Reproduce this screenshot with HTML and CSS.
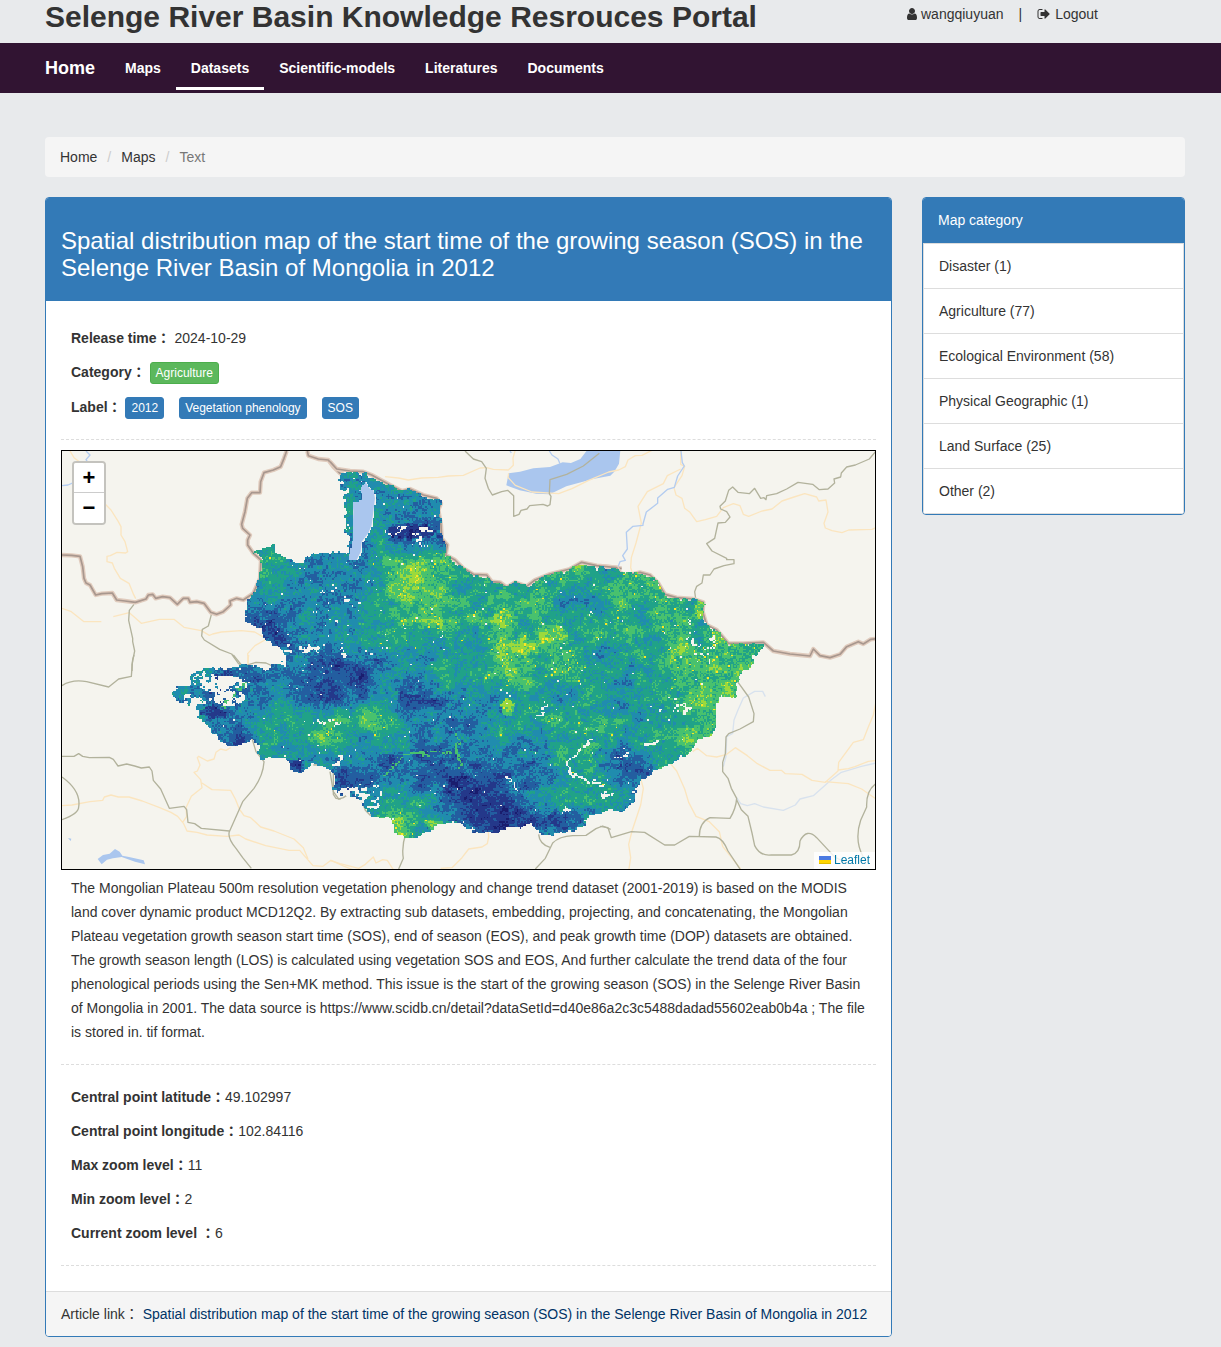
FILE: index.html
```html
<!DOCTYPE html>
<html lang="en">
<head>
  <meta charset="UTF-8" />
  <title>Selenge River Basin Knowledge Resrouces Portal</title>
  <link rel="stylesheet" href="styles.css">
</head>
<body>

  <header class="container top">
    <h1 class="site-title">Selenge River Basin Knowledge Resrouces Portal</h1>
    <div class="user-links">
      <a href="#"><svg class="icon icon-user" viewBox="256 0 1280 1792"><path d="M1536 1399q0 109-62.500 187t-150.500 78h-854q-88 0-150.500-78t-62.500-187q0-85 8.500-160.500t31.500-152 58.500-131 94-89 134.500-34.500q131 128 313 128t313-128q76 0 134.500 34.500t94 89 58.500 131 31.500 152 8.500 160.500zm-256-887q0 159-112.500 271.500t-271.500 112.500-271.500-112.500-112.500-271.500 112.500-271.500 271.500-112.500 271.500 112.500 112.500 271.500z"/></svg>wangqiuyuan</a>
      <span class="divider">|</span>
      <a href="#"><svg class="icon" viewBox="0 0 1792 1792"><path d="M704 1440q0 4 1 20t.5 26.500-3 23.500-10 19.500-20.500 6.500h-320q-119 0-203.500-84.500t-84.500-203.500v-704q0-119 84.500-203.500t203.500-84.500h320q13 0 22.500 9.500t9.500 22.500q0 4 1 20t.5 26.500-3 23.500-10 19.500-20.500 6.500h-320q-66 0-113 47t-47 113v704q0 66 47 113t113 47h312l11.500 1 11.500 3 8 5.500 7 9 2 13.500zm928-544q0 26-19 45l-544 544q-19 19-45 19t-45-19-19-45v-288h-448q-26 0-45-19t-19-45v-384q0-26 19-45t45-19h448v-288q0-26 19-45t45-19 45 19l544 544q19 19 19 45z"/></svg>Logout</a>
    </div>
  </header>

  <nav class="navbar">
    <div class="container nav-inner">
      <a class="brand" href="#">Home</a>
      <a class="nav-link" href="#">Maps</a>
      <a class="nav-link active" href="#">Datasets</a>
      <a class="nav-link" href="#">Scientific-models</a>
      <a class="nav-link" href="#">Literatures</a>
      <a class="nav-link" href="#">Documents</a>
    </div>
  </nav>

  <main class="container">
    <ol class="breadcrumb">
      <li><a href="#">Home</a></li>
      <li><a href="#">Maps</a></li>
      <li class="current">Text</li>
    </ol>

    <div class="columns">
      <article class="panel">
        <div class="panel-heading">
          <h3>Spatial distribution map of the start time of the growing season (SOS) in the Selenge River Basin of Mongolia in 2012</h3>
        </div>
        <div class="panel-body">
          <div class="info">
            <p><b>Release time：</b> 2024-10-29</p>
            <p><b>Category：</b> <button class="tag green">Agriculture</button></p>
            <p class="tags"><b>Label：</b> <button class="tag">2012</button><button class="tag">Vegetation phenology</button><button class="tag">SOS</button></p>
          </div>
          <hr>
          <div class="map">
            <svg class="map-layer" viewBox="62 451 813 418" preserveAspectRatio="xMidYMid slice">
              <!-- north west -->
              <g transform="translate(60 445) scale(.33333)">
                <path class="river" d="M78 18l12 12-12 14 8 12M6 122l18-2 18-8"/>
                <path class="road" d="M30 18l12 20 18 14M133 175l20 20 22 35 8 15v25l12 20 8 30-6 4-26-2-20 10-10 2v16l16 4 6 16 18 30 26 15 14 34 6 12M6 490l28 10 38 30h52M160 515l48-12 36 32 54-12 44 0 30 24 52 10 24 14 10-4 26-6 60-4 40 4 34 20M620 582l-35 20-22 24 2 34"/>
                <path class="rail" d="M222 478l-14 18-2 30 12 54 0 10 6 28-8 40v20M455 505l-10 38-18 10-2 20 8 12 46 28 36 14 20 28 16 10"/>
                <path class="halo" d="M6 330l29 1 25 3 8 31 4 35 6 14 12 6 17 30 18-4 32-2 13 21 25 3 31 4 32-10 7-12 13-2 9 12 21-5 22 3 22 20 18-18 15 0 5 12 20-2 22 5 20 27 18 6 20-8 22-20-2-12 20-8 20 5 30-20 20-45 3-55-23-20-17-25 0-15 7-15-22-20-3-12 10-38 7-40 13-17 25 0 2-33 10-27 28-8 22-10 10-25 8-22M742 18l3 14 30 10 30 3 15 20 20 20 20 9"/>
                <path class="border" d="M6 330l29 1 25 3 8 31 4 35 6 14 12 6 17 30 18-4 32-2 13 21 25 3 31 4 32-10 7-12 13-2 9 12 21-5 22 3 22 20 18-18 15 0 5 12 20-2 22 5 20 27 18 6 20-8 22-20-2-12 20-8 20 5 30-20 20-45 3-55-23-20-17-25 0-15 7-15-22-20-3-12 10-38 7-40 13-17 25 0 2-33 10-27 28-8 22-10 10-25 8-22M742 18l3 14 30 10 30 3 15 20 20 20 20 9"/>
              </g>
              <!-- north, Khuvsgul and Baikal -->
              <g transform="translate(330 445) scale(.33333)">
                <path class="water" d="M105 108l13 22 12 5 5 25-5 40-5 40-10 25-20 25-3 30-12 25H52l6-25 4-20 6-50 2-50-2-30 24-5V145l-7-10zM536 85l34-5 40-10 50-4 38-14 25 2 28-12 20-26h100l-4 40-14 24-12 12-52 10-80 22-50 24-40-2-50-10-40-15z"/>
                <path class="river" d="M658 18l8 12 18 12 6 14M540 18l4 6"/>
                <path class="road" d="M165 95l40 4 30 6 40-6 50-2 30-4 45-2 50-22 20-1 20 5 45 2 15-14-1-22 8-28M536 85l-2 12 22 24 50 20 80 5 40-15 50-25 60-25 30-6 20-10 8-20 22-13 20-1 30-15"/>
                <path class="rail" d="M405 18l25 24 25 8 14 20-4 30 10 30 12 20 28-10 18-4 18 16v62l16-6 6-12 18-4 8-10 40-4 14 5 7-4 3-25-5-8 2-42 50-16 50-25 48-38"/>
                <path class="halo" d="M0 50l20 22 40 6 40 2 25 10 55 30 35 18 25-6 40 18 40 10 13 15-8 20 8 45 2 40 17 20-5 30 28 15 25 25 30 18 40 2 15 20 25 2 20 15 25-15 35 12 25-19 45-18 60-15 35-20 45 10 60 6 15 3"/>
                <path class="border" d="M0 50l20 22 40 6 40 2 25 10 55 30 35 18 25-6 40 18 40 10 13 15-8 20 8 45 2 40 17 20-5 30 28 15 25 25 30 18 40 2 15 20 25 2 20 15 25-15 35 12 25-19 45-18 60-15 35-20 45 10 60 6 15 3"/>
              </g>
              <!-- north east -->
              <g transform="translate(600 445) scale(.33333)">
                <path class="road" d="M242 18v40l12 6-8 28-24 36 6 22 18 10 8 30 16 12 20 28 26-6 34-10 20-26 30-12 20 6 10 26 16 6 40-16 30-6 30-24 36-12 32-10 36 10 6 12 22-3 6 36-12 34 4 14 20 8 30 6 20-8 70-2 18-8M242 72l-40 20-12 24-48 24-28 44 10 50-16 60-14 44-2 30 4 12"/>
                <path class="river" d="M243 18l4 35 6 10-20 30-10 34-20 6-30 26 0 16-34 26-10 36 0 4-30 3-20 18 3 50-14 20 8 14-16 4-6 16"/>
                <path class="rail" d="M828 18l-20 24-42 18-26 6-16 18-2 12-20 6 2 12-20 18-26 2-20-16-44-6-34 20-30 14-30 6-2 12-6-6-10 2-18-30-16 16-34-4-16-16-12 10-10 32-16 16 2 8 18 8 10 16-14 16-22 2-10 46-24 16 16 22 44 22 0 4h22v12l-30 6-30 10-12 18-20 0-4 24-16 10-6 16 4 28"/>
                <path class="halo" d="M0 363l50 5 10 15 20 9 40-10 30 8 25 25 20 33 35 10 50 4 30 10-2 28 12 40 30 15 35 40 45 0 60-3 30 26 50 9 60 6 10-21 20 20 30 6 30-10 20-23 35-15 15 7 22-14 18-2"/>
                <path class="border" d="M0 363l50 5 10 15 20 9 40-10 30 8 25 25 20 33 35 10 50 4 30 10-2 28 12 40 30 15 35 40 45 0 60-3 30 26 50 9 60 6 10-21 20 20 30 6 30-10 20-23 35-15 15 7 22-14 18-2"/>
              </g>
              <!-- south west -->
              <g transform="translate(60 655) scale(.33333)">
                <path class="water" d="M113 612l16-12 20-4 16-14 14 8 8 12 20 4 44 10 4 12-30-8-40-14-26 4-18 4-16 14z M24 549l10 2-2 7z"/>
                <path class="road" d="M6 452l30-2 54-10 38-4 5-10 20-6 22 6h32l40 12 52 20 34 14 20 12 18 22 10 22 30 4 30 8 60 4 36-4 20 12 60 20 70 14h32l40 46 30 2 24-18 40 18 60 24M512 278l-14 8-16-4-14 10-6 20-20 6-26-14-4 4 8 22-8 18-10 4 20 22 4 24-32 26-16 34 2 26-12 18M426 384l30 20 56 2 14 26 12 30 14 20 20 6 30 28 40 12 60 24 28 26 14 34M563 25l3-25"/>
                <path class="rail" d="M6 92q30-20 74-12l66 16 30-24 38-8 4-50 4-14M520 0l28 34 40-12 30 2 30 14 20-4M6 304l36 0 14-8 12 8 20 4 60-1 12 6 14 20 26-6 24 6 20 6 24-3 8 12 4 28 22 26 26 58 44-6 8 10 4 38 20 4 20 14 84 8M6 366q58 42 50 90 0 20-50 38M576 250l12 40 24 30q-2 40-30 80l-34 40-40 90q-6 20 20 50l20 28 26 32M640 300l26-4 20 14M760 330l40-2 20 20 0 70 8 12 14 2"/>
              </g>
              <!-- south -->
              <g transform="translate(330 655) scale(.33333)">
                <path class="road" d="M0 616l30 10 56 14 20-12 24-22 8 18 20-10 14 2 18 28M332 640l34-2 30-30 20-26 40-6 16-10 4-20-2-30"/>
                <path class="rail" d="M0 350l10 60 16 22 14-4 30-20 22 20 14 38 14 14 40-6M228 534q-14 40-8 76l-14 32M626 538q2 30 36 40M616 642l30-32 22-46q20-20 60-22l40-1 30-20 20-8 24 10"/>
              </g>
              <!-- south east -->
              <g transform="translate(600 655) scale(.33333)">
                <path class="river pale" d="M496 125l-8-16-24 0-34 20-16 36-12 30-4 40-18 10-2 60-8 30M410 428l12 18 20 6 22-6 26 10 60 10 36-16 14-18 40-10 54-48 30-22 60-18 44-10"/>
                <path class="road" d="M828 140l-8 40-16 38-14 36-30 8-44 60-2 26-38 34-40-6-30-18-50-2-12-10h-34l-38-20-30-24-36-24-26 20-30 8-30-4-28-22-14 10M675 380l70 6 40 16 43 30M715 345l30-4 20-6 40-16 20-2M210 324l20 24 24 54 12 40 22 42 40 16 30 30 10 44 40 50 14 18M122 370l8 30-8 50-26 78-10 40 6 40-6 40"/>
                <path class="rail" d="M410 76l36 50 16 50-2 24-40 22-34 14-8 10-2 50-8 26 0 28 16 20 10 30 16 30q-2 30-20 60l-60-2q-32 14-32 56M410 434l14 30 20 20 12 50 8 38q16 32 50 28h60q26-6 26-42 20-40 50-10l30 32 24 26 40 20M0 514l24 4 10 30 60-18 40 2 60 38h30l44-26 80 2q20 4 36 42l36 54M828 386q-30 20-28 70l-18 40q-20 60 8 110"/>
              </g>
            </svg>
            <canvas class="map-layer raster" id="raster" width="542" height="279"></canvas>
            <div class="zoom">
              <button title="Zoom in">+</button>
              <button title="Zoom out">−</button>
            </div>
            <div class="attribution">
              <a href="#"><svg width="12" height="8" viewBox="0 0 12 8"><path fill="#4c7be1" d="M0 0h12v4H0z"/><path fill="#ffd500" d="M0 4h12v3H0z"/><path fill="#e0bc00" d="M0 7h12v1H0z"/></svg> Leaflet</a>
            </div>
          </div>
          <p class="description">The Mongolian Plateau 500m resolution vegetation phenology and change trend dataset (2001-2019) is based on the MODIS land cover dynamic product MCD12Q2. By extracting sub datasets, embedding, projecting, and concatenating, the Mongolian Plateau vegetation growth season start time (SOS), end of season (EOS), and peak growth time (DOP) datasets are obtained. The growth season length (LOS) is calculated using vegetation SOS and EOS, And further calculate the trend data of the four phenological periods using the Sen+MK method. This issue is the start of the growing season (SOS) in the Selenge River Basin of Mongolia in 2001. The data source is https://www.scidb.cn/detail?dataSetId=d40e86a2c3c5488dadad55602eab0b4a ; The file is stored in. tif format.</p>
          <hr>
          <div class="info">
            <p><b>Central point latitude：</b>49.102997</p>
            <p><b>Central point longitude：</b>102.84116</p>
            <p><b>Max zoom level：</b>11</p>
            <p><b>Min zoom level：</b>2</p>
            <p><b>Current zoom level ：</b>6</p>
          </div>
          <hr>
        </div>
        <div class="panel-footer">
          Article link： <a href="#">Spatial distribution map of the start time of the growing season (SOS) in the Selenge River Basin of Mongolia in 2012</a>
        </div>
      </article>

      <aside class="panel">
        <div class="side-heading">Map category</div>
        <ul class="categories">
          <li><a href="#">Disaster (1)</a></li>
          <li><a href="#">Agriculture (77)</a></li>
          <li><a href="#">Ecological Environment (58)</a></li>
          <li><a href="#">Physical Geographic (1)</a></li>
          <li><a href="#">Land Surface (25)</a></li>
          <li><a href="#">Other (2)</a></li>
        </ul>
      </aside>
    </div>
  </main>

  <script src="raster.js"></script>
</body>
</html>
```
FILE: styles.css
```css
* {
  box-sizing: border-box;
}

body {
  margin: 0;
  background: #e8eaec;
  color: #333;
  font-family: "Liberation Sans", Arial, "Noto Sans CJK TC", sans-serif;
  font-size: 14px;
  line-height: 24px;
}

a {
  color: #333;
  text-decoration: none;
}

.container {
  max-width: 1179px;
  margin: 0 auto;
  padding: 0 15px 0 24px;
}

.top {
  display: flex;
  height: 43px;
}

.site-title {
  flex: 0 0 75%;
  margin: 0;
  font-size: 30px;
  line-height: 33px;
}

.user-links {
  display: flex;
  padding: 2px 0 0 7px;
}

.divider {
  margin: 0 15px;
}

.icon {
  width: 14px;
  height: 14px;
  margin-right: 4px;
  fill: #333;
  vertical-align: -2px;
}

.icon-user {
  width: 10px;
}

.navbar {
  background: #311432;
}

.nav-inner {
  display: flex;
  height: 50px;
}

.brand,
.nav-link {
  color: #fff;
  font-weight: bold;
  line-height: 50px;
}

.brand {
  margin-right: 15px;
  font-size: 18px;
}

.nav-link {
  height: 47px;
  padding: 0 15px;
}

.nav-link.active {
  border-bottom: 3px solid #fff;
}

.breadcrumb {
  display: flex;
  margin: 44px 0 20px;
  padding: 8px 15px;
  list-style: none;
  background: #f5f5f5;
  border-radius: 4px;
}

.breadcrumb li + li::before {
  content: "/";
  padding: 0 10px;
  color: #ccc;
}

.breadcrumb .current {
  color: #777;
}

.columns {
  display: grid;
  grid-template-columns: minmax(0, 847fr) minmax(0, 263fr);
  align-items: start;
  gap: 30px;
}

.panel {
  background: #fff;
  border: 1px solid #337ab7;
  border-radius: 4px;
  overflow: hidden;
}

.panel-heading {
  padding: 29px 15px 20px;
  background: #337ab7;
  color: #fff;
}

.panel-heading h3 {
  margin: 0;
  font-size: 24px;
  font-weight: normal;
  line-height: 27px;
}

.panel-body {
  padding: 15px;
}

.info {
  padding: 10px 10px 0;
}

.info p {
  margin: 0 0 10px;
}

.info .tags {
  margin-top: 11px;
}

hr {
  margin: 10px 0;
  border: 0;
  border-top: 1px dashed #ddd;
}

.info + hr {
  margin-top: 20px;
}

.tag {
  height: 22px;
  margin: 0;
  padding: 1px 5px;
  border: 1px solid #337ab7;
  border-radius: 3px;
  background: #337ab7;
  color: #fff;
  font-family: inherit;
  font-size: 12px;
  line-height: 18px;
}

.tag.green {
  background: #5cb85c;
  border-color: #4cae4c;
}

.tag + .tag {
  margin-left: 15px;
}

.map {
  position: relative;
  height: 420px;
  border: 1px solid #000;
  background: #f5f4ee;
  overflow: hidden;
}

.map-layer {
  position: absolute;
  top: 0;
  left: 0;
  width: 100%;
  height: 100%;
}

.raster {
  object-fit: cover;
  image-rendering: pixelated;
}

.map-layer path {
  fill: none;
  stroke-linejoin: round;
}

.map-layer .water {
  fill: #aac6ee;
}

.map-layer .river {
  stroke: #b3ccf0;
  stroke-width: 4;
}

.map-layer .river.pale {
  stroke: #d8e2ee;
}

.map-layer .road {
  stroke: #fbe5bf;
  stroke-width: 4;
}

.map-layer .rail {
  stroke: #b2b29c;
  stroke-width: 4;
}

.map-layer .halo {
  stroke: #e0cbbd;
  stroke-width: 13;
}

.map-layer .border {
  stroke: #a8978e;
  stroke-width: 5;
}

.zoom {
  position: absolute;
  top: 10px;
  left: 10px;
  width: 34px;
  border: 2px solid #c4c3be;
  border-radius: 4px;
  overflow: hidden;
}

.zoom button {
  display: block;
  width: 30px;
  height: 30px;
  padding: 0;
  border: 0;
  background: #fff;
  color: #000;
  font: bold 22px/30px "Liberation Sans", sans-serif;
}

.zoom button:first-child {
  border-bottom: 1px solid #ccc;
}

.attribution {
  position: absolute;
  right: 0;
  bottom: 0;
  padding: 0 5px;
  background: rgba(255, 255, 255, 0.8);
  font-size: 12px;
  line-height: 17px;
}

.attribution a {
  color: #0078a8;
}

.description {
  margin: 0 0 20px;
  padding: 6px 10px 0;
}

.panel-footer {
  padding: 10px 15px;
  background: #f5f5f5;
  border-top: 1px solid #ddd;
}

.panel-footer a {
  color: #003366;
}

.side-heading {
  padding: 10px 15px 11px;
  background: #337ab7;
  color: #fff;
}

.categories {
  margin: 0;
  padding: 0;
  list-style: none;
  border: 1px solid #ddd;
}

.categories li {
  padding: 10px 15px;
}

.categories li + li {
  border-top: 1px solid #ddd;
}
```
FILE: raster.js
```js
// start-of-season classes, early (dark blue) to late (yellow)
const palette = [
  [26, 29, 110], [36, 56, 138], [35, 94, 160], [32, 140, 174],
  [32, 162, 136], [72, 193, 110], [155, 217, 60], [253, 231, 37]
];

// mean class per 20px cell, first cell at (170, 470)
const grid = [
  '333333333333333333333333333333',
  '333333333333334444444444444444',
  '333333334433224444444444444444',
  '333344333342224444444444444444',
  '333344333345554444445444444444',
  '333344333345554454444445544444',
  '333333333345554444533354544555',
  '333222333344554454444444454555',
  '333222334444444455544444454555',
  '333333322234344455454344455555',
  '332223222133444445444434444555',
  '332333222342223334434433445555',
  '333244445554332334444443445555',
  '332144454334233343344434455555',
  '333333333332222222344432433333',
  '333333332222221222334422433333',
  '333333332344421112344442233333',
  '333333333355432111233322223333',
  '333333333355443211222212333333',
  '333333333355543211222223333333'
];

const outline = [338,472,366,473,372,477,390,485,402,491,415,490,425,496,440,501,439,515,441,530,443,542,446,556,
  455,562,462,568,473,575,488,577,492,582,507,587,515,583,527,586,535,580,550,574,570,569,582,563,600,566,616,568,
  622,574,640,573,652,577,660,587,665,595,680,599,694,599,702,603,703,620,708,626,718,632,728,643,745,644,763,643,
  765,647,752,655,752,665,741,671,737,682,735,690,733,696,720,697,716,703,715,720,712,732,700,737,696,741,688,753,
  670,762,655,770,650,777,640,779,636,790,631,801,625,810,612,811,600,811,590,815,583,823,575,831,560,833,547,834,
  540,833,531,824,515,826,505,827,497,832,480,834,467,828,458,823,450,821,436,824,425,831,415,839,400,836,393,834,
  391,823,389,815,376,816,366,813,355,795,347,795,338,796,333,787,334,773,328,768,312,763,305,770,293,771,288,762,
  275,757,262,760,256,753,258,745,250,739,236,746,226,745,213,732,200,720,198,710,190,703,175,700,172,693,175,688,
  190,683,192,671,205,668,225,668,245,664,262,668,282,664,283,654,275,646,261,636,258,625,247,622,244,600,254,592,
  260,570,261,556,253,553,262,548,273,545,277,541,275,552,290,561,302,565,308,555,320,552,330,556,340,550,345,553,
  347,545,345,520,345,505,342,490,338,482];

const lake = [365,481,369,488,373,490,375,498,373,512,372,525,368,533,362,542,361,552,357,560,347,560,349,552,351,545,
  353,528,353,512,353,502,361,500,361,493,358,490];

// cells without data: x, y, rx, ry, share
const gaps = [
  [222, 684, 24, 9, 0.8], [228, 697, 16, 8, 0.7], [196, 698, 16, 6, 0.6], [205, 680, 14, 8, 0.4],
  [408, 531, 24, 6, 0.35], [425, 541, 18, 5, 0.35], [700, 640, 22, 26, 0.22], [675, 710, 20, 14, 0.25],
  [352, 795, 16, 9, 0.55], [372, 795, 10, 14, 0.35], [335, 607, 25, 22, 0.2], [300, 647, 20, 6, 0.35],
  [340, 650, 35, 8, 0.2], [335, 760, 12, 6, 0.4], [345, 478, 9, 9, 0.35], [346, 515, 4, 30, 0.35],
  [607, 795, 8, 4, 0.4], [595, 783, 9, 4, 0.3], [566, 810, 6, 4, 0.5], [320, 722, 20, 5, 0.25]
];

// local class shifts: x, y, rx, ry, shift
const spots = [
  [506, 708, 7, 9, 2], [440, 824, 18, 4, 1.5], [415, 684, 24, 14, -0.7], [458, 782, 10, 6, -1],
  [268, 630, 8, 9, -1], [500, 620, 20, 6, 0.8], [550, 632, 18, 9, 0.9], [515, 645, 22, 7, 0.8],
  [700, 610, 5, 10, 1.3], [690, 675, 20, 18, 0.5], [522, 757, 12, 8, 0.9], [395, 780, 20, 12, 0.5],
  [212, 713, 12, 6, -1.2], [380, 655, 20, 8, -0.8], [607, 760, 14, 12, -0.8], [565, 818, 18, 10, -0.8],
  [293, 765, 9, 6, -1.4], [410, 531, 24, 8, -1.2]
];

// valley lines: x1, y1, x2, y2, class (-1 is no data)
const valleys = [
  [403, 753, 452, 752, 5], [456, 734, 459, 768, 5], [403, 753, 385, 773, 5], [565, 762, 592, 738, -1],
  [565, 762, 574, 775, -1], [574, 775, 598, 784, -1], [535, 720, 547, 705, -1], [504, 776, 516, 788, -1],
  [222, 705, 246, 682, 5], [614, 757, 630, 752, -1], [645, 745, 656, 741, -1]
];

let seed = 7;
function random() {
  seed = (seed * 16807) % 2147483647;
  return seed / 2147483647;
}

function hash(x, y) {
  const n = Math.sin(x * 127.1 + y * 311.7) * 43758.5453;
  return n - Math.floor(n);
}

function noise(x, y) {
  const ix = Math.floor(x), iy = Math.floor(y);
  const fx = x - ix, fy = y - iy;
  const a = hash(ix, iy) * (1 - fx) + hash(ix + 1, iy) * fx;
  const b = hash(ix, iy + 1) * (1 - fx) + hash(ix + 1, iy + 1) * fx;
  return a * (1 - fy) + b * fy - 0.5;
}

function meanClass(x, y) {
  const gx = Math.max(0, Math.min(28.99, (x - 180) / 20));
  const gy = Math.max(0, Math.min(18.99, (y - 480) / 20));
  const ix = Math.floor(gx), iy = Math.floor(gy);
  const fx = gx - ix, fy = gy - iy;
  const a = +grid[iy][ix] * (1 - fx) + +grid[iy][ix + 1] * fx;
  const b = +grid[iy + 1][ix] * (1 - fx) + +grid[iy + 1][ix + 1] * fx;
  return a * (1 - fy) + b * fy;
}

function inside(points, x, y) {
  let hit = false;
  for (let i = 0, j = points.length - 2; i < points.length; j = i, i += 2) {
    const yi = points[i + 1], yj = points[j + 1];
    if ((yi > y) !== (yj > y) && x < (points[j] - points[i]) * (y - yi) / (yj - yi) + points[i]) hit = !hit;
  }
  return hit;
}

function within(area, x, y) {
  const dx = (x - area[0]) / area[2], dy = (y - area[1]) / area[3];
  return dx * dx + dy * dy < 1;
}

function lineDistance(l, x, y) {
  const dx = l[2] - l[0], dy = l[3] - l[1];
  const t = Math.max(0, Math.min(1, ((x - l[0]) * dx + (y - l[1]) * dy) / (dx * dx + dy * dy)));
  return Math.hypot(x - l[0] - t * dx, y - l[1] - t * dy);
}

const canvas = document.getElementById('raster');
const ctx = canvas.getContext('2d');
const image = ctx.createImageData(canvas.width, canvas.height);

for (let py = 0; py < canvas.height; py++) {
  for (let px = 0; px < canvas.width; px++) {
    const x = 62 + px * 1.5, y = 451 + py * 1.5;
    const jx = x + noise(x / 4, y / 4) * 6, jy = y + noise(x / 4 + 50, y / 4) * 6;
    if (!inside(outline, jx, jy) || inside(lake, x, y)) continue;

    let value = meanClass(x, y) + noise(x / 14, y / 9) * 1.4 + noise(x / 5 + 9, y / 4) * 1.6 + (random() - 0.5) * 1.1;
    for (const s of spots) if (within(s, jx, jy)) value += s[4];

    let color = palette[Math.max(0, Math.min(7, Math.round(value)))];
    if (value > 4.4 && random() < 0.02) color = palette[7];
    if (random() < 0.004) color = [245, 244, 238];
    for (const g of gaps) {
      if (within(g, x, y) && noise(x / 4 + 30, y / 3 + 30) + 0.5 + (random() - 0.5) * 0.3 < g[4] * 0.85) color = [245, 244, 238];
    }
    for (const v of valleys) {
      if (lineDistance(v, jx, jy) < 1.1 && random() < 0.85) color = v[4] < 0 ? [245, 244, 238] : palette[v[4]];
    }

    const i = (py * canvas.width + px) * 4;
    image.data.set([color[0], color[1], color[2], 255], i);
  }
}

ctx.putImageData(image, 0, 0);
```
